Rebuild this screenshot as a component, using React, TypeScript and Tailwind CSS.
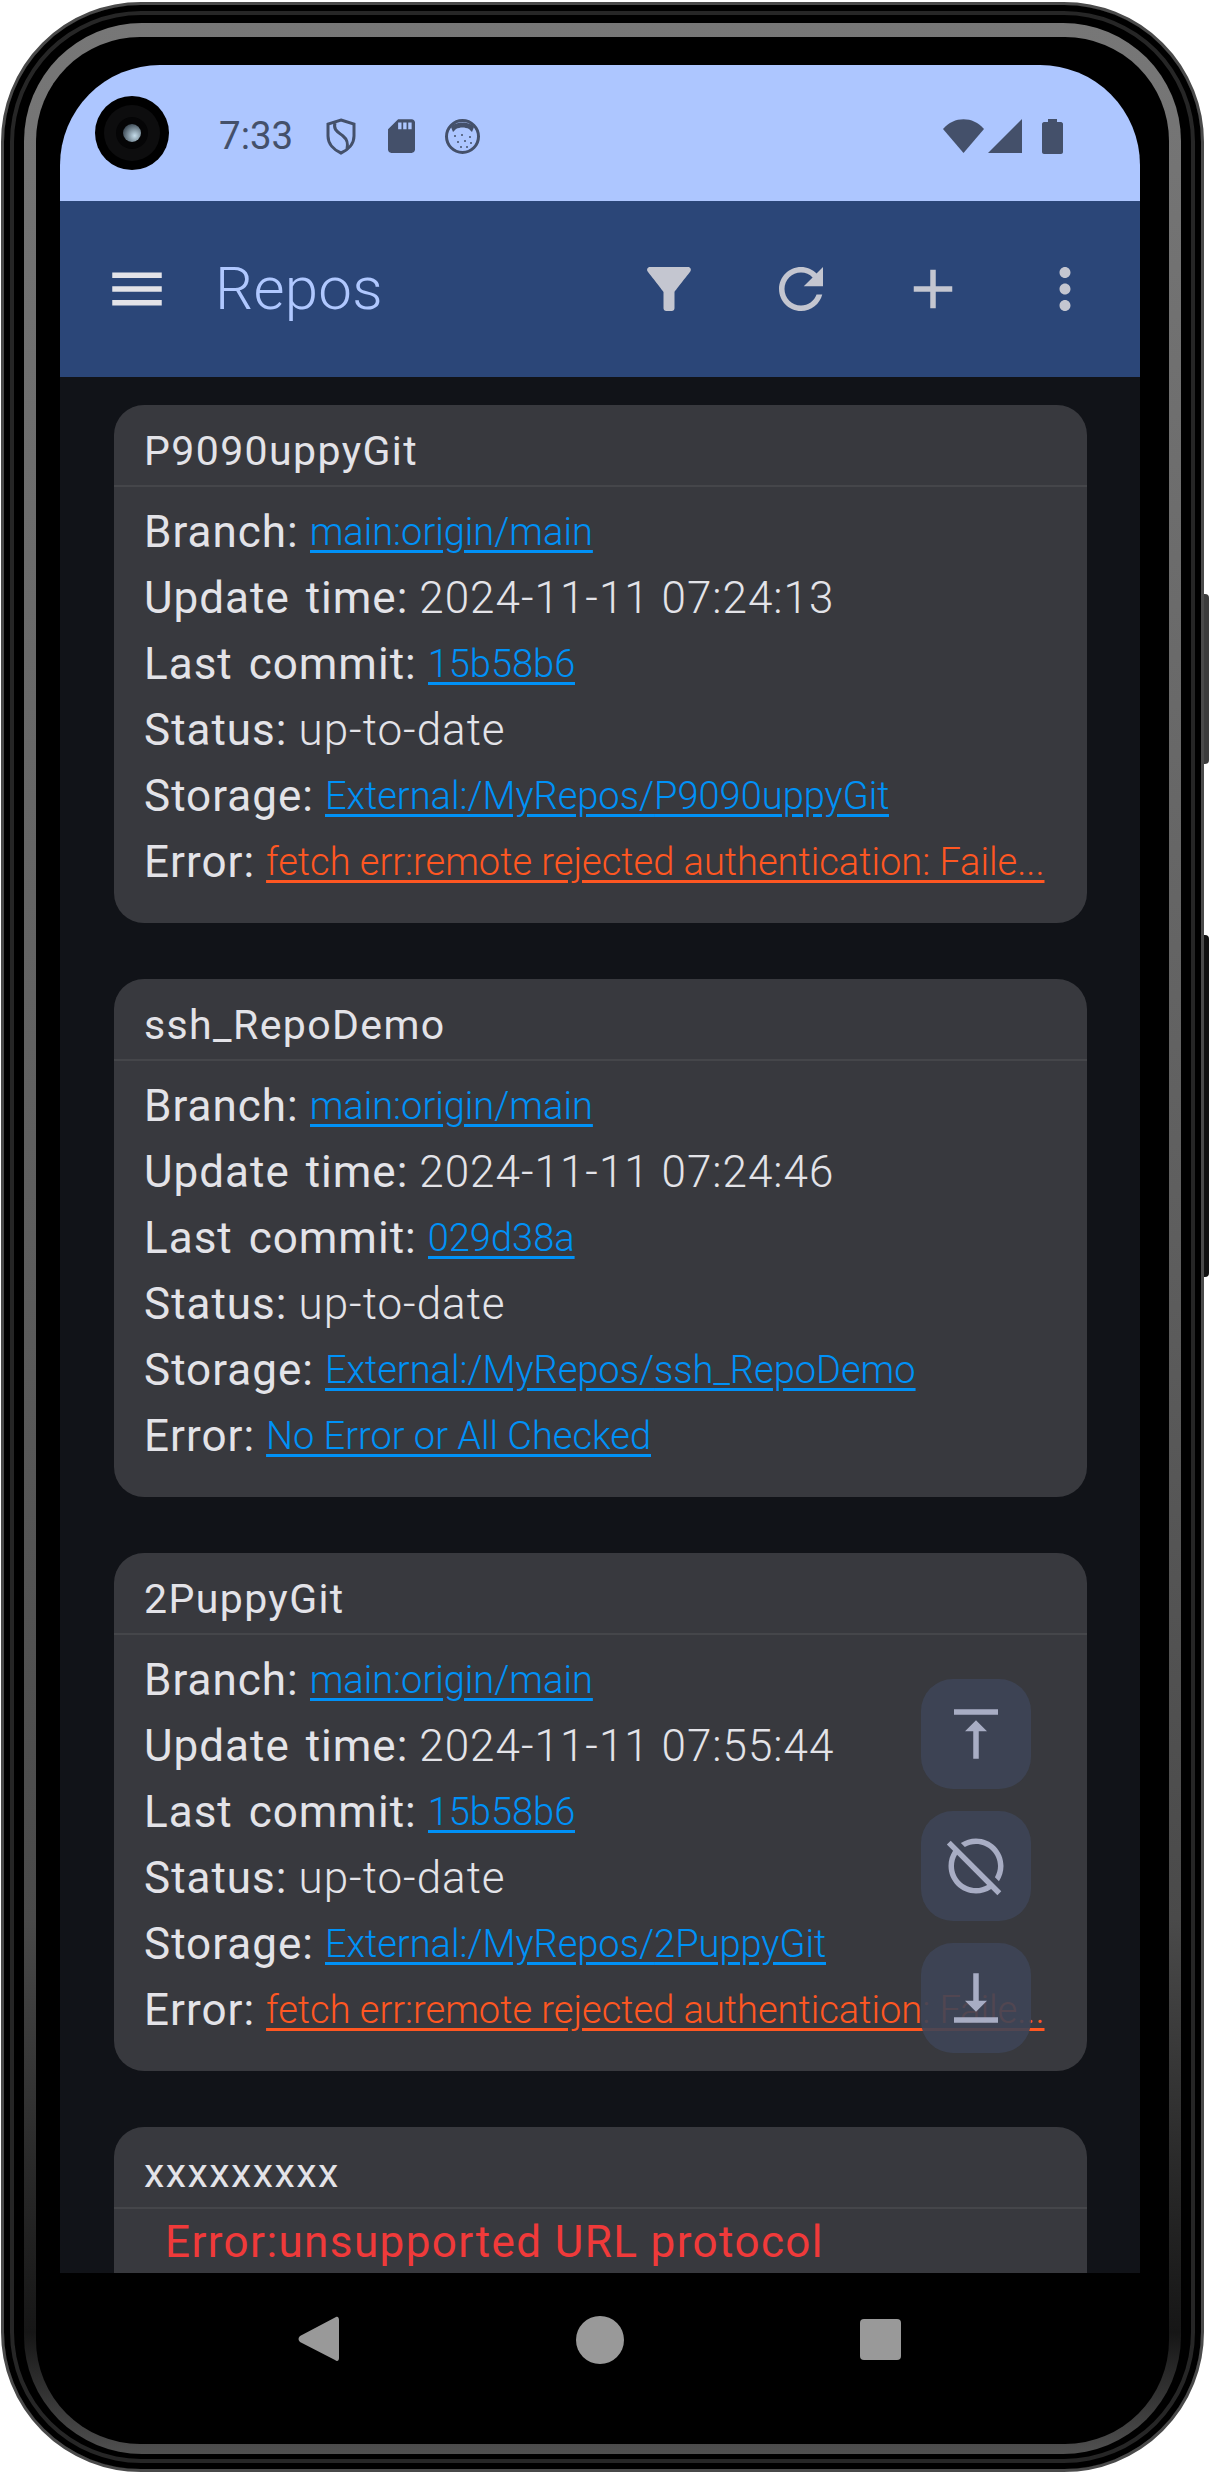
import type { ReactNode } from 'react'

const PATHS = {
  menu: 'M3 18h18v-2H3v2zm0-5h18v-2H3v2zm0-7v2h18V6H3z',
  filter:
    'M4.25 5.61C6.27 8.2 10 13 10 13v6c0 .55.45 1 1 1h2c.55 0 1-.45 1-1v-6s3.72-4.8 5.74-7.39c.51-.66.04-1.61-.79-1.61H5.04c-.83 0-1.3.95-.79 1.61z',
  refresh:
    'M17.65 6.35C16.2 4.9 14.21 4 12 4c-4.42 0-7.99 3.58-7.99 8s3.57 8 7.99 8c3.73 0 6.84-2.55 7.73-6h-2.08c-.82 2.33-3.04 4-5.65 4-3.31 0-6-2.69-6-6s2.69-6 6-6c1.66 0 3.14.69 4.22 1.78L13 11h7V4l-2.35 2.35z',
  add: 'M19 13h-6v6h-2v-6H5v-2h6V5h2v6h6v2z',
  more: 'M12 8c1.1 0 2-.9 2-2s-.9-2-2-2-2 .9-2 2 .9 2 2 2zm0 2c-1.1 0-2 .9-2 2s.9 2 2 2 2-.9 2-2-.9-2-2-2zm0 6c-1.1 0-2 .9-2 2s.9 2 2 2 2-.9 2-2-.9-2-2-2z',
  top: 'M8 11h3v10h2V11h3l-4-4-4 4zM4 3v2h16V3H4z',
  bottom: 'M16 13h-3V3h-2v10H8l4 4 4-4zM4 19v2h16v-2H4z',
  hide:
    'M2.81 2.81L1.39 4.22l2.27 2.27C2.61 8.07 2 9.96 2 12c0 5.52 4.48 10 10 10 2.04 0 3.93-.61 5.51-1.66l2.27 2.27 1.41-1.41L2.81 2.81zM12 20c-4.41 0-8-3.59-8-8 0-1.48.41-2.86 1.12-4.06l10.94 10.94C14.86 19.59 13.48 20 12 20zM7.94 5.12L6.49 3.66C8.07 2.61 9.96 2 12 2c5.52 0 10 4.48 10 10 0 2.04-.61 3.93-1.66 5.51l-1.46-1.46C19.59 14.86 20 13.48 20 12c0-4.41-3.59-8-8-8-1.48 0-2.86.41-4.06 1.12z',
}

function Icon({ d, className }: { d: string; className?: string }) {
  return (
    <svg viewBox="0 0 24 24" fill="currentColor" className={className}>
      <path d={d} />
    </svg>
  )
}

function StatusBar() {
  return (
    <div className="flex h-[136px] shrink-0 items-center bg-[#adc6ff] pl-[35px] pr-[77px] text-[#44506a]">
      {/* punch-hole camera */}
      <div className="flex h-[74px] w-[74px] items-center justify-center rounded-full bg-black">
        <div className="flex h-[56px] w-[56px] items-center justify-center rounded-full bg-[#0d0d0e]">
          <div className="flex h-[32px] w-[32px] items-center justify-center rounded-full bg-[#050506]">
            <div className="h-[18px] w-[18px] rounded-full bg-[radial-gradient(circle_at_65%_65%,#c4dcea,#3d4a55_75%)]" />
          </div>
        </div>
      </div>
      <span className="ml-[50px] mt-[6px] text-[38.5px] leading-none">7:33</span>
      <svg viewBox="0 0 30 37" className="ml-[33px] mt-[6px] h-[37px] w-[30px]" fill="none" stroke="currentColor" strokeWidth="3">
        <path d="M15 2 L28 6 V18 C28 26 22 32 15 35 C8 32 2 26 2 18 V6 Z" />
        <path d="M9 5 C7 12 12 14 17 18 C22 22 22 26 21 31" />
      </svg>
      <svg viewBox="4 2 16 20" className="ml-[32px] mt-[6px] h-[34px] w-[27px]" fill="currentColor">
        <path d="M18 2h-8L4.02 8 4 20c0 1.1.9 2 2 2h12c1.1 0 2-.9 2-2V4c0-1.1-.9-2-2-2zm-6 6h-2V4h2v4zm3 0h-2V4h2v4zm3 0h-2V4h2v4z" />
      </svg>
      <svg viewBox="0 0 35 35" className="ml-[30px] mt-[6px] h-[35px] w-[35px]">
        <circle cx="17.5" cy="17.5" r="16" fill="#adc6ff" stroke="currentColor" strokeWidth="3" />
        <path d="M6 8 C10 2 25 2 29 8 L27 13 L24 10 C20 8 15 8 11 10 L8 13 Z" fill="currentColor" />
        <g fill="currentColor">
          <circle cx="10" cy="17" r="1" />
          <circle cx="17" cy="16" r="1" />
          <circle cx="25" cy="18" r="1" />
          <circle cx="13" cy="23" r="1" />
          <circle cx="20" cy="22" r="1" />
          <circle cx="26" cy="24" r="1" />
          <circle cx="16" cy="28" r="1" />
          <circle cx="22" cy="28" r="1" />
        </g>
      </svg>
      <div className="ml-auto mt-[6px] flex items-center">
        <svg viewBox="0 0 41 34" className="h-[34px] w-[41px]" fill="currentColor">
          <path d="M20.5 34 L0 10 C11 -3 30 -3 41 10 Z" />
        </svg>
        <svg viewBox="0 0 34 34" className="ml-[4px] h-[34px] w-[34px]" fill="currentColor">
          <path d="M34 0 V34 H0 Z" />
        </svg>
        <svg viewBox="0 0 21 35" className="ml-[20px] h-[35px] w-[21px]" fill="currentColor">
          <path d="M6 3 V0 H15 V3 H19 C20 3 21 4 21 5 V33 C21 34 20 35 19 35 H2 C1 35 0 34 0 33 V5 C0 4 1 3 2 3 Z" />
        </svg>
      </div>
    </div>
  )
}

function TopBar() {
  const actions = [PATHS.filter, PATHS.refresh, PATHS.add, PATHS.more]
  return (
    <div className="flex h-[176px] shrink-0 items-center bg-[#2b4678] pl-[11px] pr-[9px]">
      <div className="flex w-[132px] justify-center text-[#e3e3e8]">
        <Icon d={PATHS.menu} className="h-[66px] w-[66px]" />
      </div>
      <span className="ml-[12px] text-[60px] font-light leading-none tracking-[0.3px] text-[#b0c8ff]">Repos</span>
      <div className="ml-auto flex text-[#c4c6d0]">
        {actions.map((d, i) => (
          <div key={i} className="flex w-[132px] justify-center">
            <Icon d={d} className="h-[66px] w-[66px]" />
          </div>
        ))}
      </div>
    </div>
  )
}

function Row({ label, children }: { label: string; children: ReactNode }) {
  return (
    <div className="flex h-[66px] items-center whitespace-nowrap text-[#e3e3e8]">
      <span className="shrink-0 text-[44px] tracking-[1px] [word-spacing:4px]">{label}</span>
      {children}
    </div>
  )
}

function Plain({ children }: { children: ReactNode }) {
  return <span className="ml-[11px] text-[44px] font-light tracking-[1px]">{children}</span>
}

function Link({ children, error }: { children: ReactNode; error?: boolean }) {
  return (
    <span
      className={
        'ml-[11px] min-w-0 truncate text-[38px] font-light underline underline-offset-[5px] ' +
        (error ? 'text-[#ff5722]' : 'text-[#0091f7]')
      }
    >
      {children}
    </span>
  )
}

type Repo = {
  name: string
  time: string
  commit: string
  error: string
  failed: boolean
}

const repos: Repo[] = [
  {
    name: 'P9090uppyGit',
    time: '2024-11-11 07:24:13',
    commit: '15b58b6',
    error: 'fetch err:remote rejected authentication: Faile...',
    failed: true,
  },
  {
    name: 'ssh_RepoDemo',
    time: '2024-11-11 07:24:46',
    commit: '029d38a',
    error: 'No Error or All Checked',
    failed: false,
  },
  {
    name: '2PuppyGit',
    time: '2024-11-11 07:55:44',
    commit: '15b58b6',
    error: 'fetch err:remote rejected authentication: Faile...',
    failed: true,
  },
]

function CardTitle({ children }: { children: ReactNode }) {
  return (
    <div className="flex h-[82px] items-center border-b-[2px] border-[#45464a] pl-[30px] pt-[14px] text-[41px] tracking-[1.4px] text-[#e3e3e8]">
      {children}
    </div>
  )
}

function RepoCard({ repo }: { repo: Repo }) {
  return (
    <div className="h-[518px] rounded-[30px] bg-[#38393e]">
      <CardTitle>{repo.name}</CardTitle>
      <div className="px-[30px] pt-[12px]">
        <Row label="Branch:">
          <Link>main:origin/main</Link>
        </Row>
        <Row label="Update time:">
          <Plain>{repo.time}</Plain>
        </Row>
        <Row label="Last commit:">
          <Link>{repo.commit}</Link>
        </Row>
        <Row label="Status:">
          <Plain>up-to-date</Plain>
        </Row>
        <Row label="Storage:">
          <Link>External:/MyRepos/{repo.name}</Link>
        </Row>
        <Row label="Error:">
          <Link error={repo.failed}>{repo.error}</Link>
        </Row>
      </div>
    </div>
  )
}

function ScrollButtons() {
  const icons = [PATHS.top, PATHS.hide, PATHS.bottom]
  return (
    <div className="absolute left-[861px] top-[1302px] flex flex-col gap-[22px]">
      {icons.map((d, i) => (
        <div key={i} className="flex h-[110px] w-[110px] items-center justify-center rounded-[32px] bg-[#3e4556]/90 text-[#a8adc4]">
          <Icon d={d} className="h-[66px] w-[66px]" />
        </div>
      ))}
    </div>
  )
}

function NavBar() {
  return (
    <div className="flex flex-1 items-start bg-black pl-[238px] pt-[43px]">
      <svg viewBox="0 0 41 46" className="h-[46px] w-[41px]" fill="#999999">
        <path d="M38 1 C40 0 41 2 41 4 V42 C41 45 39 46 37 44 L2 26 C0 24 0 22 2 20 Z" />
      </svg>
      <div className="ml-[237px] h-[48px] w-[48px] rounded-full bg-[#999999]" />
      <div className="ml-[236px] mt-[3px] h-[41px] w-[41px] rounded-[4px] bg-[#999999]" />
    </div>
  )
}

export default function App() {
  return (
    <div className="relative h-[2474px] w-[1211px] overflow-hidden bg-white font-['Roboto',sans-serif]">
      {/* side buttons */}
      <div className="absolute left-[1200px] top-[594px] h-[170px] w-[9px] rounded-r-[4px] bg-[#3c3c3c]" />
      <div className="absolute left-[1200px] top-[935px] h-[342px] w-[9px] rounded-r-[4px] bg-[#111111]" />

      {/* phone body */}
      <div className="absolute left-[1px] top-[2px] h-[2470px] w-[1203px] rounded-[140px] border-[3px] border-[#4a4a4a] bg-black pb-[15px] pl-[20px] pr-[20px] pt-[18px] shadow-[inset_0_0_0_6px_#000,inset_0_0_0_10px_#262626,inset_0_0_2px_8px_#000]">
        {/* gray inner band, fades towards the chin */}
        <div className="h-full rounded-[118px] bg-[linear-gradient(to_bottom,#777777_0%,#5e5e5e_50%,#4a4a4a_78%,#2a2a2a_88%,#161616_95%,#505050_100%)] px-[12px] pb-[10px] pt-[14px]">
          <div className="h-full rounded-[104px] bg-black pl-[24px] pr-[29px] pt-[28px]">
            <div className="flex h-full flex-col overflow-hidden rounded-[100px]">
              <StatusBar />
              <TopBar />
              <div className="relative h-[1896px] shrink-0 overflow-hidden bg-[#111318] pl-[54px] pr-[53px] pt-[28px]">
                <div className="flex flex-col gap-[56px]">
                  {repos.map((r) => (
                    <RepoCard key={r.name} repo={r} />
                  ))}
                  <div className="h-[200px] rounded-t-[30px] bg-[#38393e]">
                    <CardTitle>xxxxxxxxx</CardTitle>
                    <div className="pl-[51px] pt-[3px] text-[44px] leading-[60px] tracking-[1.4px] text-[#f03a3a]">Error:unsupported URL protocol</div>
                  </div>
                </div>
                <ScrollButtons />
              </div>
              <NavBar />
            </div>
          </div>
        </div>
      </div>
    </div>
  )
}
